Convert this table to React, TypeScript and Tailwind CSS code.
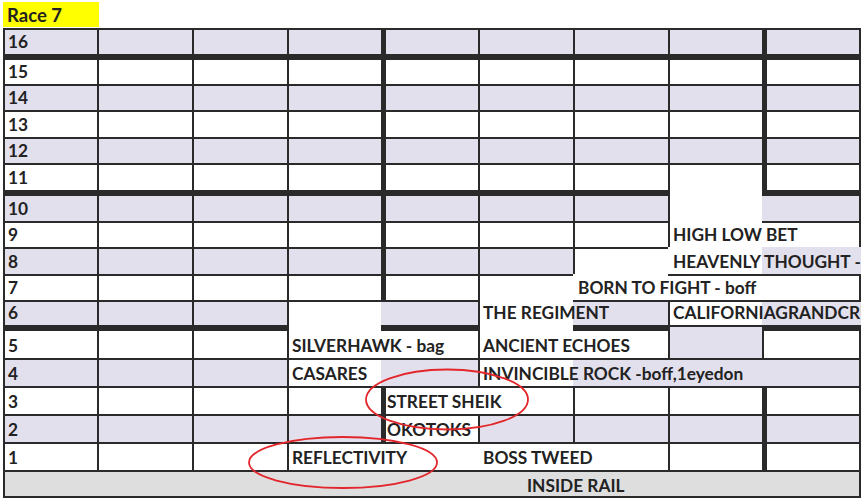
import React from "react";

type Fill = "L" | "W";
type Line = 0 | 1 | 2;
interface Cell {
  f: Fill;
  t: Line; // line above the cell
  l: Line; // line left of the cell
  r: boolean; // right edge line (last column only)
  x?: string;
}

const ROWS = [16, 15, 14, 13, 12, 11, 10, 9, 8, 7, 6, 5, 4, 3, 2, 1];
const THICK_TOP = [15, 10, 5];
const LEFT_DEFAULT: Line[] = [1, 1, 1, 1, 2, 1, 1, 1, 2];

// irregular bits of the sheet, keyed "row-col"
const overrides: Record<string, Partial<Cell>> = {
  "10-7": { f: "W", t: 0 },
  "10-8": { l: 0 },
  "9-7": { t: 0, x: "HIGH LOW BET" },
  "9-8": { l: 0 },
  "8-6": { f: "W" },
  "8-7": { f: "W", t: 0, l: 0, x: "HEAVENLY THOUGHT -" },
  "8-8": { l: 0, t: 0, r: false },
  "7-6": { l: 0, t: 0, x: "BORN TO FIGHT - boff" },
  "7-7": { l: 0 },
  "7-8": { l: 0 },
  "6-3": { f: "W" },
  "6-4": { l: 0 },
  "6-5": { f: "W", t: 0, x: "THE REGIMENT" },
  "6-6": { l: 0 },
  "6-7": { f: "W", x: "CALIFORNIAGRANDCRU" },
  "6-8": { l: 0, r: false },
  "5-3": { t: 0, x: "SILVERHAWK - bag" },
  "5-4": { l: 0 },
  "5-5": { t: 0, x: "ANCIENT ECHOES" },
  "5-6": { l: 0 },
  "5-7": { f: "L", t: 1 },
  "5-8": { l: 1 },
  "4-3": { f: "W", x: "CASARES" },
  "4-4": { l: 0 },
  "4-5": { f: "W", x: "INVINCIBLE ROCK -boff,1eyedon" },
  "4-6": { l: 0 },
  "4-7": { l: 0 },
  "4-8": { l: 0 },
  "3-4": { x: "STREET SHEIK" },
  "3-5": { l: 0 },
  "2-4": { f: "W", x: "OKOTOKS" },
  "1-3": { x: "REFLECTIVITY" },
  "1-4": { l: 0 },
  "1-5": { l: 0, x: "BOSS TWEED" },
  "1-6": { l: 0 },
};

const fillCls: Record<Fill, string> = {
  L: "bg-[#e2e0ed]",
  W: "bg-white",
};
const topCls: Record<Line, string> = {
  0: "border-t-0",
  1: "border-t-2 border-t-[#2a2a2a]",
  2: "border-t-[6px] border-t-[#2a2a2a]",
};
const leftCls: Record<Line, string> = {
  0: "border-l-0 pl-[5px]",
  1: "border-l-2 border-l-[#2a2a2a] pl-[3px]",
  2: "border-l-[5px] border-l-[#2a2a2a] pl-[1px]",
};

function buildRow(n: number): Cell[] {
  return LEFT_DEFAULT.map((l, c) => {
    const base: Cell = {
      f: n % 2 === 0 ? "L" : "W",
      t: THICK_TOP.includes(n) ? 2 : 1,
      l,
      r: c === 8,
      x: c === 0 ? String(n) : undefined,
    };
    return { ...base, ...overrides[`${n}-${c}`] };
  });
}

function SheetCell({ cell }: { cell: Cell }) {
  return (
    <div
      className={`flex items-end min-w-0 pb-[4px] ${fillCls[cell.f]} ${topCls[cell.t]} ${leftCls[cell.l]} ${
        cell.r ? "border-r-2 border-r-[#2a2a2a]" : ""
      }`}
    >
      {cell.x && <span className="relative z-10 whitespace-nowrap leading-none">{cell.x}</span>}
    </div>
  );
}

export default function App() {
  return (
    <div
      className="relative w-[864px] h-[504px] overflow-hidden bg-white text-[17.3px] font-bold text-[#222]"
      style={{ fontFamily: "Lato, 'Liberation Sans', sans-serif" }}
    >
      <div className="ml-[3px] mt-[2px] w-[96px] h-[25px] bg-[#ffff00] flex items-end pl-[4px] pb-[3px]">
        <span className="leading-none text-[18.5px]">Race 7</span>
      </div>

      <div className="mt-[1px] ml-[3px] w-[858px] overflow-hidden grid grid-cols-[94px_95px_95px_94px_97px_95px_95px_94px_99px] grid-rows-[26px_30px_26px_27px_26px_27px_31px_26px_27px_26px_25px_33px_28px_28px_28px_28px_28px]">
        {ROWS.map((n) => buildRow(n).map((cell, c) => <SheetCell key={`${n}-${c}`} cell={cell} />))}
        <div className="col-span-9 flex items-end bg-[#dedede] border-2 border-[#2a2a2a] pl-[522px] pb-[2px]">
          <span className="whitespace-nowrap leading-none">INSIDE RAIL</span>
        </div>
      </div>

      {/* hand-drawn circles */}
      <svg className="absolute inset-0 z-20 pointer-events-none" width="864" height="504" viewBox="0 0 864 504">
        <ellipse cx="447" cy="399.5" rx="81" ry="30" fill="none" stroke="#e3262b" strokeWidth="1.8" />
        <ellipse cx="343" cy="462.5" rx="94" ry="25.5" fill="none" stroke="#e3262b" strokeWidth="1.8" />
      </svg>
    </div>
  );
}
